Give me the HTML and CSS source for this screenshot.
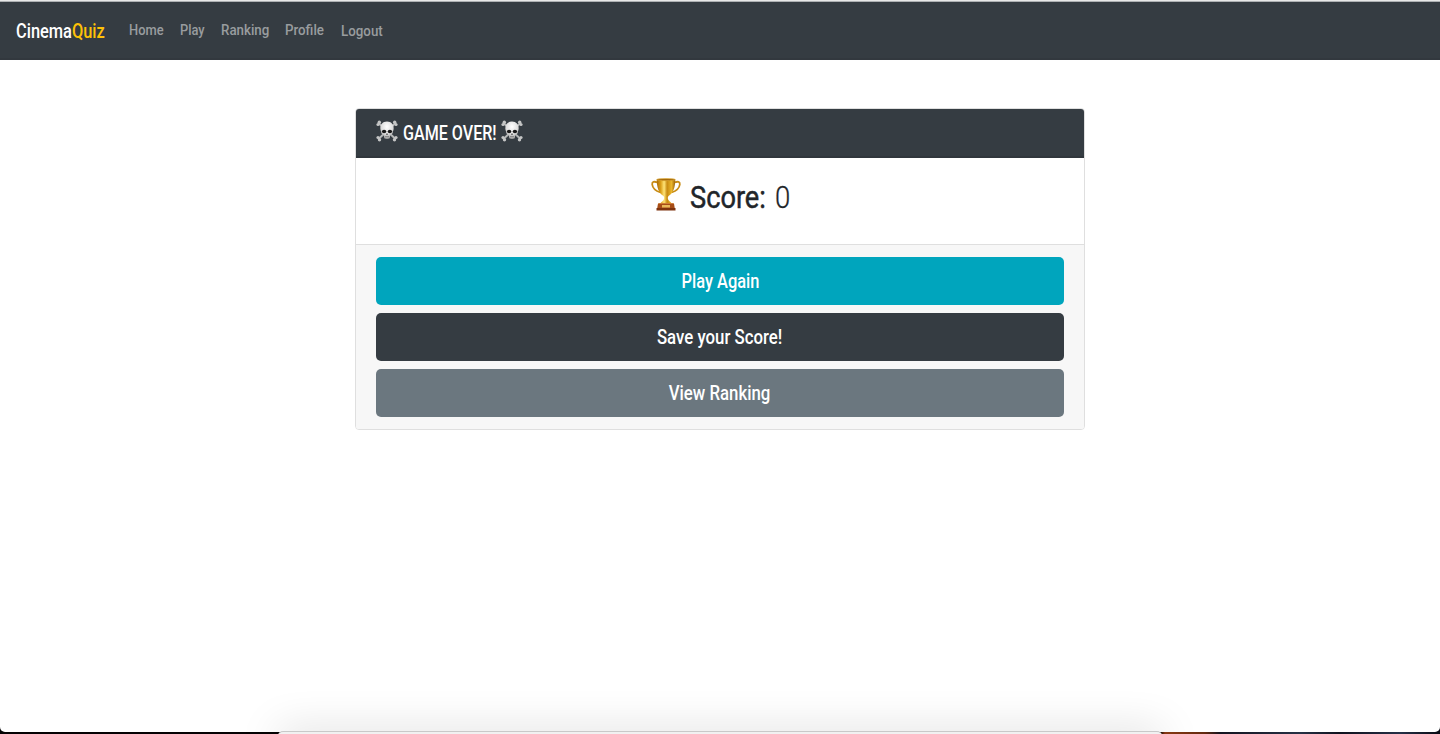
FILE: index.html
```html
<!DOCTYPE html>
<html lang="en">
<head>
<meta charset="utf-8">
<title>CinemaQuiz</title>
<link rel="stylesheet" href="styles.css">
</head>
<body>
<svg width="0" height="0" class="defs" aria-hidden="true">
  <defs>
    <radialGradient id="bone" cx=".5" cy=".3" r=".7"><stop offset="0" stop-color="#fff"/><stop offset=".6" stop-color="#dedede"/><stop offset="1" stop-color="#969696"/></radialGradient>
    <linearGradient id="gold" x1="0" x2="1" y1="0" y2="0"><stop offset="0" stop-color="#a96b08"/><stop offset=".22" stop-color="#dca019"/><stop offset=".4" stop-color="#ffe477"/><stop offset=".56" stop-color="#c78a10"/><stop offset=".8" stop-color="#eab62c"/><stop offset="1" stop-color="#99600a"/></linearGradient>
    <symbol id="skull" viewBox="0 0 22 22">
      <g stroke="#b4b6b6" stroke-width="2" stroke-linecap="round"><path d="M3 3.500 19 18.500M19 3.500 3 18.500"/></g>
      <g fill="#c4c5c5"><circle cx="3.300" cy="2.200" r="1.700"/><circle cx="2" cy="4.500" r="1.600"/><circle cx="18.700" cy="2.200" r="1.700"/><circle cx="20" cy="4.500" r="1.600"/><circle cx="2" cy="17.500" r="1.600"/><circle cx="3.500" cy="19.800" r="1.700"/><circle cx="20" cy="17.500" r="1.600"/><circle cx="18.500" cy="19.800" r="1.700"/></g>
      <path fill="url(#bone)" d="M11 1.500c-4.500 0-7 3.300-6.700 7.200.1 1.500.8 2.500.9 3.700.2 1.500 1.700 2 2.500 2.600l.5 3.200c1.400 1 4.200 1 5.600 0l.5-3.200c.8-.6 2.300-1.100 2.500-2.600.1-1.200.8-2.200.9-3.700.3-3.900-2.200-7.200-6.700-7.200z"/>
      <ellipse cx="8.100" cy="11.500" rx="2.200" ry="1.800" fill="#181818"/><ellipse cx="13.900" cy="11.500" rx="2.200" ry="1.800" fill="#181818"/>
      <path d="m11 12.900-1 1.800h2z" fill="#333"/><path d="M9 16.500h4" stroke="#777" stroke-width=".7"/>
    </symbol>
    <symbol id="trophy" viewBox="0 0 30 33">
      <path d="M6.500 4.500C3 3 .9 3.800 1.200 6.500c.4 3.500 3.700 6.500 8.300 8M23.500 4.500c3.500-1.500 5.600-.7 5.300 2-.4 3.500-3.700 6.500-8.300 8" fill="none" stroke="#c88c16" stroke-width="1.800"/>
      <path fill="url(#gold)" d="M5.700 1.500h18.600c-.1 7.500-1.700 13.800-6.800 16.500-1 1-.8 3 .1 4.200 1.100 1.400 2.700 2.200 3.400 3.800H9c.7-1.600 2.300-2.400 3.400-3.800.9-1.200 1.100-3.200.1-4.200C7.400 15.300 5.800 9 5.700 1.500z"/>
      <ellipse cx="15" cy="1.600" rx="9.300" ry="1.100" fill="#a56a0b" stroke="#e5b23b" stroke-width=".6"/>
      <path d="M7 25.500h16l.8 5H6.200z" fill="#a64d17"/><path d="M5.500 30h19v2.500h-19z" fill="#7e330e"/><path d="M11 27h8v2.600h-8z" fill="#e9b858"/><path d="M7.500 25.500h15" stroke="#cf7c35"/>
    </symbol>
  </defs>
</svg>
<div class="page">
  <nav class="navbar">
    <a class="brand"><span class="fit">Cinema<b>Quiz</b></span></a>
    <a class="link home"><span class="fit">Home</span></a>
    <a class="link play"><span class="fit">Play</span></a>
    <a class="link ranking"><span class="fit">Ranking</span></a>
    <a class="link profile"><span class="fit">Profile</span></a>
    <a class="link logout"><span class="fit">Logout</span></a>
  </nav>
  <main class="card">
    <header class="card-header">
      <svg class="skull"><use href="#skull"/></svg>
      <h1 class="title"><span class="fit">GAME OVER!</span></h1>
      <svg class="skull"><use href="#skull"/></svg>
    </header>
    <section class="card-body">
      <svg class="trophy"><use href="#trophy"/></svg>
      <h2 class="score"><span class="fit">Score:</span></h2>
      <span class="points"><span class="fit">0</span></span>
    </section>
    <footer class="card-footer">
      <a class="btn info"><span class="fit">Play Again</span></a>
      <a class="btn dark"><span class="fit">Save your Score!</span></a>
      <a class="btn secondary"><span class="fit">View Ranking</span></a>
    </footer>
  </main>
</div>
<div class="dock"></div>
</body>
</html>
```
FILE: styles.css
```css
* { box-sizing: border-box; }
body {
  margin: 0;
  height: 734px;
  overflow: hidden;
  position: relative;
  background: linear-gradient(90deg, #050304 0 1160px, #8c3b14 1165px, #63290f 1205px, #141420 1220px, #263145 1300px, #10121e 1340px, #253047 1400px, #090b14);
  font-family: Roboto, "Liberation Sans", sans-serif;
  font-weight: 500;
}
.defs { position: absolute; }
.page {
  height: 732px;
  background: #fff;
  border-top: 1px solid #e8e8e8;
  border-radius: 0 0 5px 5px;
}
.fit { display: inline-block; white-space: nowrap; transform-origin: 0 50%; }
.navbar {
  display: flex;
  height: 59px;
  padding: 0 16px;
  background: #353c42;
  border-top: 1px solid #aeb1b3;
  border-bottom: 2px solid #32383e;
}
.brand { width: 89px; margin-right: 24px; font-size: 20px; line-height: 58px; color: #fff; }
.brand .fit { transform: scaleX(.82); }
.brand b { font-weight: 500; color: #ffc107; }
.link { margin-right: 16px; font-size: 15.500px; line-height: 56px; color: #999c9f; }
.link .fit { transform: scaleX(.83); }
.home { width: 35px; }
.play { width: 25px; }
.ranking { width: 48px; }
.profile { width: 40px; }
.logout { width: 42px; line-height: 58px; }
.ranking .fit, .profile .fit, .logout .fit { transform: scaleX(.86); }
.card {
  width: 730px;
  margin: 48px auto 0;
  border: 1px solid #dfdfdf;
  border-radius: 4px;
  overflow: hidden;
}
.card-header {
  display: flex;
  height: 49px;
  padding: 11px 20px;
  background: #353c42;
  border-bottom: 2px solid #30363c;
}
.skull { width: 22px; height: 22px; }
.title { width: 93px; margin: 0 5px; font-size: 20px; font-weight: 500; line-height: 26px; color: #fff; }
.title .fit { transform: scaleX(.805); }
.card-body {
  display: flex;
  justify-content: center;
  height: 87px;
  padding-top: 20px;
  border-bottom: 1px solid #dfdfdf;
  color: #212529;
}
.trophy { width: 30px; height: 33px; margin-right: 9px; }
.score { width: 75px; margin: 0 10px 0 0; font-size: 32px; font-weight: 400; line-height: 38px; -webkit-text-stroke: .5px #212529; }
.score .fit { transform: scaleX(.85); }
.points { width: 15px; font-size: 32px; font-weight: 300; line-height: 38px; -webkit-text-stroke: .3px #212529; }
.points .fit { transform: scaleX(.86); }
.card-footer { display: grid; gap: 8px; padding: 12px 20px; background: #f7f7f7; }
.btn {
  height: 48px;
  border-radius: 5px;
  color: #fff;
  font-size: 20px;
  line-height: 48px;
  text-align: center;
}
.btn .fit { transform: scaleX(.82); transform-origin: 50% 50%; }
.info { background: #00a5bd; }
.dark { background: #353c42; }
.dark .fit { transform: scaleX(.84); }
.secondary { background: #6b777f; }
.secondary .fit { transform: scaleX(.84); }
.dock {
  position: absolute;
  left: 278px;
  top: 731px;
  width: 884px;
  height: 20px;
  background: #f1f1f1;
  border-top: 1px solid #c9c9c9;
  border-radius: 5px 5px 0 0;
  box-shadow: 0 0 42px rgba(0, 0, 0, .17);
}
```
